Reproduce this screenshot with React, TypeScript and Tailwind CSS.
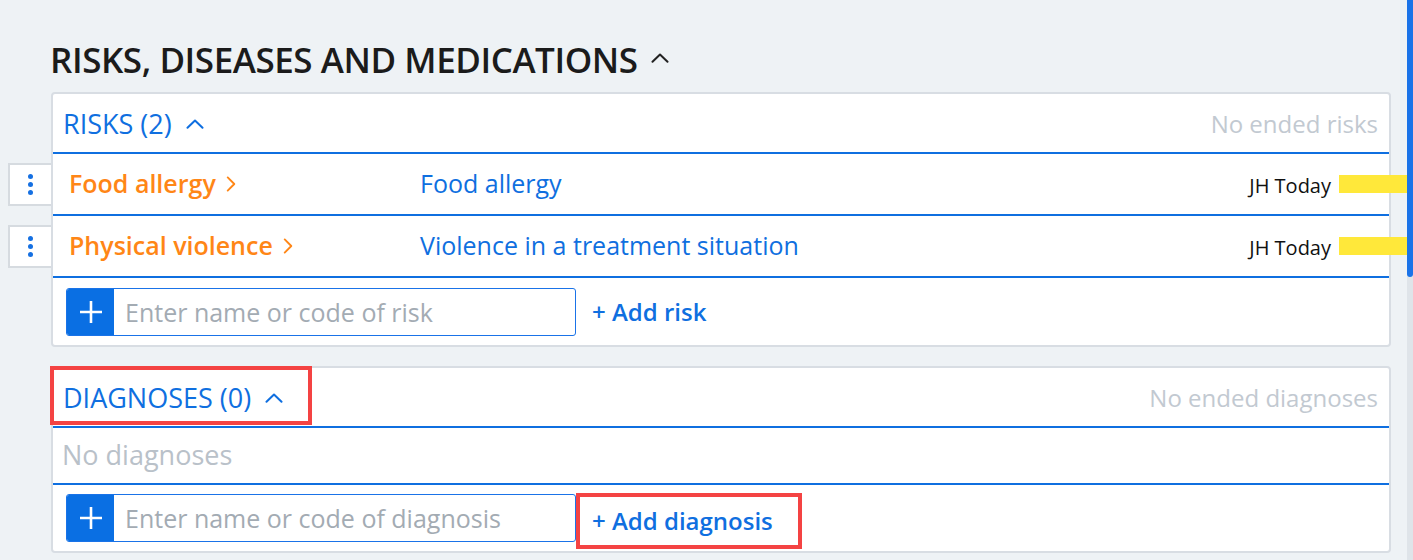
import React from "react";

function ChevronUp({ className }: { className?: string }) {
  return (
    <svg viewBox="0 0 18 10" className={className} fill="none" stroke="currentColor" strokeWidth={2} strokeLinecap="round" strokeLinejoin="round">
      <path d="M1.5 8.8 L9 1.5 L16.5 8.8" />
    </svg>
  );
}

function ChevronRight({ className }: { className?: string }) {
  return (
    <svg viewBox="0 0 10 17" className={className} fill="none" stroke="currentColor" strokeWidth={2} strokeLinecap="round" strokeLinejoin="round">
      <path d="M1.5 1.5 L8.5 8.5 L1.5 15.5" />
    </svg>
  );
}

function PlusIcon() {
  return (
    <svg viewBox="0 0 22 22" className="h-[22px] w-[22px]" fill="none" stroke="white" strokeWidth={2.6} strokeLinecap="butt">
      <path d="M11 0 V22 M0 11 H22" />
    </svg>
  );
}

function Kebab() {
  return (
    <button className="absolute left-[-45px] top-[9px] flex h-[43px] w-[43px] flex-col items-center justify-center gap-[3px] border-2 border-r-0 border-[#d6dbe0] bg-white">
      <span className="h-[5px] w-[5px] rounded-full bg-[#1570e2]" />
      <span className="h-[5px] w-[5px] rounded-full bg-[#1570e2]" />
      <span className="h-[5px] w-[5px] rounded-full bg-[#1570e2]" />
    </button>
  );
}

function RiskRow({ name, detail }: { name: string; detail: string }) {
  return (
    <div className="relative flex h-[62px] items-center border-b-2 border-[#0f6fe0] pl-[16px]">
      <Kebab />
      <div className="flex w-[351px] items-center text-[25px] font-semibold text-[#ff8616]">
        <span>{name}</span>
        <ChevronRight className="ml-[10px] h-[16px] w-[10px]" />
      </div>
      <div className="flex-1 text-[25px] text-[#0f6fe0]">{detail}</div>
      <div className="flex items-center">
        <span className="pt-[3px] text-[20px] text-[#111111]">JH Today</span>
        <span className="ml-[8px] mr-[-18px] h-[18px] w-[68px] bg-[#ffe83a]" />
      </div>
    </div>
  );
}

function AddRow({ placeholder, label, marked }: { placeholder: string; label: string; marked?: boolean }) {
  return (
    <div className={marked ? "flex h-[66px] items-center pl-[13px]" : "flex h-[67px] items-center pl-[13px]"}>
      <div className="flex h-[48px] w-[510px] overflow-hidden rounded-[3px] border-[1.5px] border-[#1a73e8] bg-white">
        <div className="flex w-[47px] items-center justify-center bg-[#0a6fe3]">
          <PlusIcon />
        </div>
        <input
          className="h-full min-w-0 flex-1 bg-transparent px-[11px] text-[25px] text-[#222] outline-none placeholder:text-[#a3abb3]"
          placeholder={placeholder}
        />
      </div>
      <button
        className={
          marked
            ? "mt-[6px] flex h-[56px] items-center border-4 border-[#f44343] pl-[12px] pr-[25px] text-[24px] font-semibold text-[#0f6fe0]"
            : "flex h-[56px] items-center border-4 border-transparent pl-[12px] pr-[25px] text-[24px] font-semibold text-[#0f6fe0]"
        }
      >
        + {label}
      </button>
    </div>
  );
}

export default function App() {
  return (
    <div className="flex h-[560px] w-full overflow-hidden bg-[#eef2f5] font-['Open_Sans',sans-serif]">
      <main className="min-w-0 flex-1 overflow-hidden pl-[51px] pr-[16px] pt-[40px]">
        <h1 className="-ml-px flex h-[40px] items-center text-[35px] font-semibold leading-[40px] tracking-[-0.44px] text-[#1b1b1b]">
          <span>RISKS, DISEASES AND MEDICATIONS</span>
          <ChevronUp className="ml-[13px] mt-[-4px] h-[10px] w-[18px] text-[#222]" />
        </h1>

        <section className="relative mt-[12px] rounded-[4px] border-2 border-[#d8dde3] bg-white">
          <div className="flex h-[60px] items-center justify-between border-b-2 border-[#0f6fe0] pl-[10px] pr-[11px] pt-[2px]">
            <div className="flex items-center text-[27px] text-[#0f6fe0]">
              <span>RISKS (2)</span>
              <ChevronUp className="ml-[14px] h-[10px] w-[18px]" />
            </div>
            <span className="text-[24px] text-[#c2c9d1]">No ended risks</span>
          </div>
          <RiskRow name="Food allergy" detail="Food allergy" />
          <RiskRow name="Physical violence" detail="Violence in a treatment situation" />
          <AddRow placeholder="Enter name or code of risk" label="Add risk" />
        </section>

        <section className="relative mt-[19px] rounded-[4px] border-2 border-[#d8dde3] bg-white">
          <div className="relative flex h-[60px] items-center justify-between border-b-2 border-[#0f6fe0] pl-[10px] pr-[11px] pt-[2px]">
            <div className="flex items-center text-[27px] text-[#0f6fe0]">
              <span>DIAGNOSES (0)</span>
              <ChevronUp className="ml-[14px] h-[10px] w-[18px]" />
            </div>
            <span className="text-[24px] text-[#c2c9d1]">No ended diagnoses</span>
            <div className="pointer-events-none absolute left-[-3px] top-[-2px] h-[59px] w-[262px] border-4 border-[#f44343]" />
          </div>
          <div className="flex h-[57px] items-center border-b-2 border-[#0f6fe0] pl-[9px] text-[27px] text-[#b9c1c9]">
            No diagnoses
          </div>
          <AddRow placeholder="Enter name or code of diagnosis" label="Add diagnosis" marked />
        </section>
      </main>
      <aside className="w-[6px] shrink-0 bg-[#dfe4e9]">
        <div className="h-[277px] w-full rounded-b-[3px] bg-[#1a73e8]" />
      </aside>
    </div>
  );
}
